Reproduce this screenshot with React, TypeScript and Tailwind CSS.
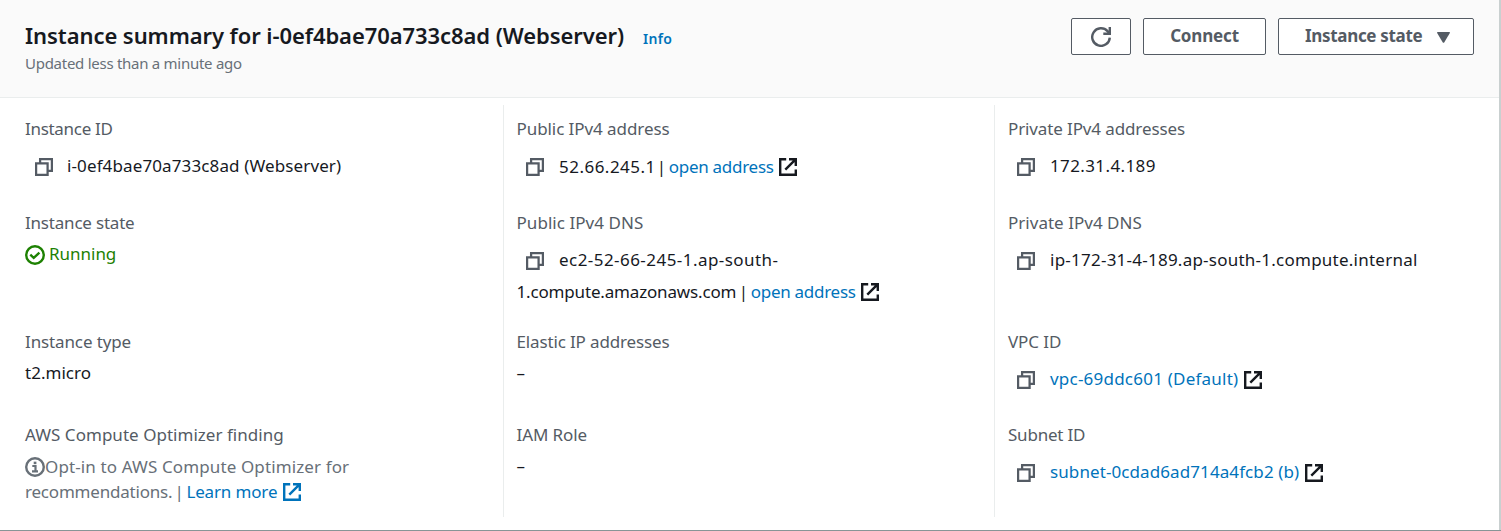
import type { ReactNode } from "react";

function CopyIcon({ className = "ml-[10px] mr-[14px]" }: { className?: string }) {
  return (
    <svg className={`h-[18px] w-[18px] shrink-0 text-[#545b64] ${className}`} viewBox="0 0 18 18" fill="none" stroke="currentColor" strokeWidth="2.25">
      <path d="M1.1 5.4h11.5v11.5H1.1z" />
      <path d="M5.1 5.4V1.1h11.8v11.8h-4.3" />
    </svg>
  );
}

function ExternalIcon({ className = "" }: { className?: string }) {
  return (
    <svg className={`h-[18px] w-[18px] shrink-0 ${className}`} viewBox="0 0 18 18" fill="none" stroke="currentColor" strokeWidth="2.4">
      <path d="M7.2 1.2h-6v15.6h15.6v-5.4" />
      <path d="M10 1.2h6.8V8M16.6 1.4L6.3 11.7" />
    </svg>
  );
}

function RefreshIcon() {
  return (
    <svg className="h-[20px] w-[20px] text-[#545b64]" viewBox="0 0 20 20" fill="none" stroke="currentColor" strokeWidth="2.4">
      <path d="M18.8 10.6a8.8 8.8 0 1 1-2.3-6.5l1.6 1.8" />
      <path d="M18.8 0v6.8h-6.5" />
    </svg>
  );
}

function CheckIcon() {
  return (
    <svg className="h-[20px] w-[20px] shrink-0" viewBox="0 0 20 20" fill="none" stroke="currentColor" strokeWidth="2.4">
      <circle cx="10" cy="10" r="8.8" />
      <path d="M5.3 9.7l3.4 3.2 5.7-5.2" />
    </svg>
  );
}

function InfoIcon() {
  return (
    <svg className="h-[20px] w-[20px] shrink-0" viewBox="0 0 20 20" fill="none" stroke="currentColor" strokeWidth="2.4">
      <circle cx="10" cy="10" r="8.8" />
      <path d="M7.3 9h3.2v5M7 14.3h6" strokeWidth="2.2" />
      <path d="M8.7 5.9h2.7" strokeWidth="2.5" />
    </svg>
  );
}

function Field({ label, track, className, children }: { label: string; track: string; className: string; children: ReactNode }) {
  return (
    <div className={`whitespace-nowrap ${className}`}>
      <div className={`h-6 text-[#545b64] ${track}`}>{label}</div>
      {children}
    </div>
  );
}

export default function App() {
  return (
    <main className="flex h-[531px] w-[1501px] flex-col border-b border-[#879596] bg-white font-['Noto_Sans',sans-serif] text-[17px] leading-6 text-[#16191f]">
      <div className="flex min-h-0 flex-1 flex-col border-r-2 border-[#c9d0d0]">
        <header className="flex h-[98px] shrink-0 justify-between border-b border-[#eaeded] bg-[#fafafa] pr-[25px] pl-[25px]">
          <div className="pt-[20px] whitespace-nowrap">
            <div className="flex h-[30px] items-baseline">
              <h1 className="text-[22px] leading-[30px] font-semibold tracking-[-0.07px]">Instance summary for i-0ef4bae70a733c8ad (Webserver)</h1>
              <a className="ml-[19px] text-[14px] leading-[20px] font-semibold tracking-[0.3px] text-[#0073bb]">Info</a>
            </div>
            <p className="mt-[2px] text-[15px] leading-[22px] tracking-[-0.27px] text-[#687078]">Updated less than a minute ago</p>
          </div>
          <div className="flex gap-3 pt-[18px] text-[17px] font-bold text-[#545b64]">
            <button className="flex h-[37px] w-[60px] items-center justify-center rounded-[2px] border border-[#545b64] bg-white">
              <RefreshIcon />
            </button>
            <button className="h-[37px] w-[123px] rounded-[2px] border border-[#545b64] bg-white pb-[2px] leading-[33px] tracking-[-0.17px]">Connect</button>
            <button className="flex h-[37px] w-[196px] items-center rounded-[2px] border border-[#545b64] bg-white pl-[26px] whitespace-nowrap">
              <span className="pb-[2px] tracking-[-0.32px]">Instance state</span>
              <svg className="mt-px ml-[15px] h-[11px] w-[13px]" viewBox="0 0 13 11" fill="currentColor">
                <path d="M0 .8Q0 0 .8 0h11.4q.8 0 .8.8L7.2 10.4q-.7.8-1.4 0z" />
              </svg>
            </button>
          </div>
        </header>

        <div className="flex flex-1 pt-[7px] pb-[13px]">
          <section className="w-[503px] pt-[12px] pl-[25px]">
            <Field label="Instance ID" track="tracking-[-0.3px]" className="h-[94px]">
              <div className="mt-[14px] flex h-6 items-center">
                <CopyIcon />
                <span className="-mt-[2px] tracking-[0.12px]">i-0ef4bae70a733c8ad (Webserver)</span>
              </div>
            </Field>
            <Field label="Instance state" track="tracking-[-0.2px]" className="h-[119px]">
              <div className="mt-2 flex h-6 items-center text-[#1d8102]">
                <CheckIcon />
                <span className="-mt-[2px] ml-[4px] tracking-[-0.02px]">Running</span>
              </div>
            </Field>
            <Field label="Instance type" track="tracking-[-0.12px]" className="h-[93px]">
              <div className="mt-[7px] tracking-[0.02px]">t2.micro</div>
            </Field>
            <Field label="AWS Compute Optimizer finding" track="tracking-[0.03px]" className="">
              <div className="mt-[7px] flex h-[25px] items-center text-[#687078]">
                <InfoIcon />
                <span className="tracking-[0.12px]">Opt-in to AWS Compute Optimizer for</span>
              </div>
              <div className="flex h-[25px] items-center text-[#687078]">
                <span className="tracking-[-0.2px]">recommendations.</span>
                <span className="ml-[2px] w-[12px]">|</span>
                <a className="mr-[6px] tracking-[-0.15px] text-[#0073bb]">Learn more</a>
                <ExternalIcon className="text-[#0073bb]" />
              </div>
            </Field>
          </section>

          <section className="w-[491px] border-l border-[#eaeded] pt-[12px] pl-[12.5px]">
            <Field label="Public IPv4 address" track="tracking-[-0.07px]" className="h-[94px]">
              <div className="mt-[14px] flex h-6 items-center">
                <CopyIcon className="mr-[15px] ml-[9.5px]" />
                <span className="tracking-[0.48px]">52.66.245.1</span>
                <span className="ml-px w-[12px]">|</span>
                <a className="mr-[5px] tracking-[-0.28px] text-[#0073bb]">open address</a>
                <ExternalIcon />
              </div>
            </Field>
            <Field label="Public IPv4 DNS" track="tracking-[0.05px]" className="h-[119px]">
              <div className="mt-[14px] flex h-6 items-center">
                <CopyIcon className="mr-[15px] ml-[9.5px]" />
                <span className="-mt-[2px] tracking-[0.45px]">ec2-52-66-245-1.ap-south-</span>
              </div>
              <div className="mt-[7px] flex h-6 items-center">
                <span className="tracking-[-0.166px]">1.compute.amazonaws.com</span>
                <span className="ml-[2.5px] w-[12px]">|</span>
                <a className="mr-[5.5px] tracking-[-0.28px] text-[#0073bb]">open address</a>
                <ExternalIcon />
              </div>
            </Field>
            <Field label="Elastic IP addresses" track="tracking-[-0.14px]" className="h-[93px]">
              <div className="mt-[7px]">–</div>
            </Field>
            <Field label="IAM Role" track="tracking-[-0.1px]" className="">
              <div className="mt-[7px]">–</div>
            </Field>
          </section>

          <section className="flex-1 border-l border-[#eaeded] pt-[12px] pl-[13px]">
            <Field label="Private IPv4 addresses" track="tracking-[-0.12px]" className="h-[94px]">
              <div className="mt-[14px] flex h-6 items-center">
                <CopyIcon className="mr-[15px] ml-[9px]" />
                <span className="-mt-[2px] tracking-[0.38px]">172.31.4.189</span>
              </div>
            </Field>
            <Field label="Private IPv4 DNS" track="tracking-[0.02px]" className="h-[119px]">
              <div className="mt-[14px] flex h-6 items-center">
                <CopyIcon className="mr-[15px] ml-[9px]" />
                <span className="-mt-[2px] tracking-[0.24px]">ip-172-31-4-189.ap-south-1.compute.internal</span>
              </div>
            </Field>
            <Field label="VPC ID" track="tracking-[-0.08px]" className="h-[93px]">
              <div className="mt-[14px] flex h-6 items-center">
                <CopyIcon className="mr-[15px] ml-[9px]" />
                <a className="-mt-[2px] mr-[6px] tracking-[0.222px] text-[#0073bb]">vpc-69ddc601 (Default)</a>
                <ExternalIcon />
              </div>
            </Field>
            <Field label="Subnet ID" track="tracking-[-0.21px]" className="">
              <div className="mt-[14px] flex h-6 items-center">
                <CopyIcon className="mr-[15px] ml-[9px]" />
                <a className="-mt-[2px] mr-[6px] tracking-[0.094px] text-[#0073bb]">subnet-0cdad6ad714a4fcb2 (b)</a>
                <ExternalIcon />
              </div>
            </Field>
          </section>
        </div>
      </div>
    </main>
  );
}
